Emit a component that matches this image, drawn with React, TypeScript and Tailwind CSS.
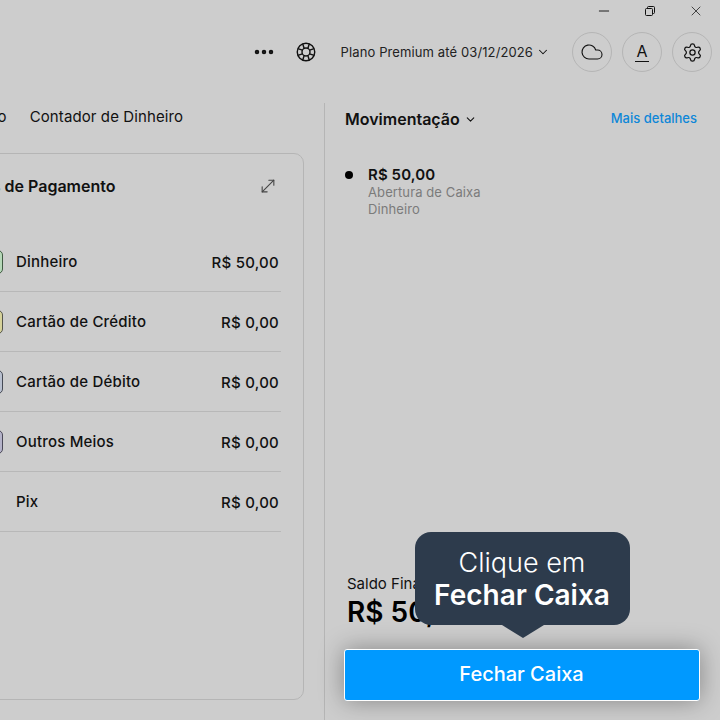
import { ChevronDown, Cloud, Ellipsis, Minus, MoveDiagonal, Settings, X } from 'lucide-react';

const rows = [
  { label: 'Cartão de Crédito', value: 'R$ 0,00', tile: 'bg-[#d6d29a] border-[#55554a]' },
  { label: 'Cartão de Débito', value: 'R$ 0,00', tile: 'bg-[#b9c0cf] border-[#454a55]' },
  { label: 'Outros Meios', value: 'R$ 0,00', tile: 'bg-[#b5b3c9] border-[#4a4858]' },
];

function Row({ label, value, tile }: { label: string; value: string; tile: string }) {
  return (
    <div className="flex h-[60px] items-center border-b border-[#b8b8b8]">
      <div className={`h-[24px] w-[24px] rounded-[5px] border ${tile}`} />
      <span className="ml-[13px] pt-[1px] text-[15px] font-medium tracking-[0.2px] text-[#111]">{label}</span>
      <span className="ml-auto mr-[2px] pt-[4px] text-[15px] font-medium tracking-[0.25px] text-[#111]">{value}</span>
    </div>
  );
}

function Buoy() {
  return (
    <svg className="mr-[25px] h-[20px] w-[20px]" viewBox="0 0 24 24" fill="none" stroke="currentColor" strokeWidth="1.7">
      <circle cx="12" cy="12" r="10.5" />
      <circle cx="12" cy="12" r="4.8" />
      <path d="M9.8 7.7 8 2.2M14.2 7.7 16 2.2M9.8 16.3 8 21.8M14.2 16.3 16 21.8M7.7 9.8 2.2 8M7.7 14.2 2.2 16M16.3 9.8 21.8 8M16.3 14.2 21.8 16" />
    </svg>
  );
}

export default function App() {
  return (
    <div className="relative flex h-[720px] w-[720px] flex-col overflow-hidden bg-[#cdcdcd] font-['Inter',sans-serif] text-[#111]">
      {/* Window controls */}
      <div className="flex h-[22px] items-center justify-end gap-[30px] pr-[16px]">
        <Minus className="-ml-px h-[16px] w-[16px]" strokeWidth={1.4} />
        <svg className="h-[16px] w-[16px]" viewBox="0 0 16 16" fill="none" stroke="currentColor" strokeWidth="1">
          <rect x="3.5" y="5.5" width="7" height="7" rx="1" />
          <path d="M5.5 5.5V4.5a1 1 0 0 1 1-1h5a1 1 0 0 1 1 1v5a1 1 0 0 1-1 1h-1" />
        </svg>
        <X className="h-[16px] w-[16px]" strokeWidth={1.1} />
      </div>

      {/* Header */}
      <div className="flex h-[60px] items-center justify-end pr-[8px]">
        <Ellipsis className="mr-[20px] h-[24px] w-[24px]" strokeWidth={2.5} />
        <Buoy />
        <span className="pt-[2px] text-[13px] tracking-[0.11px] text-[#222]">Plano Premium até 03/12/2026</span>
        <ChevronDown className="ml-[3px] mr-[22px] h-[14px] w-[14px]" strokeWidth={1.8} />
        <div className="flex gap-[10px]">
          <div className="flex h-[40px] w-[40px] items-center justify-center rounded-full border border-[#b5b5b5]">
            <Cloud className="h-[24px] w-[24px]" strokeWidth={1.1} />
          </div>
          <div className="flex h-[40px] w-[40px] items-center justify-center rounded-full border border-[#b5b5b5]">
            <span className="border-b border-[#111] px-[1px] text-[16px] leading-[19px]">A</span>
          </div>
          <div className="flex h-[40px] w-[40px] items-center justify-center rounded-full border border-[#b5b5b5]">
            <Settings className="h-[21px] w-[21px]" strokeWidth={1.4} />
          </div>
        </div>
      </div>

      {/* Main */}
      <div className="mt-[21px] flex flex-1">
        <div className="-ml-[80px] flex w-[404px] shrink-0 flex-col pr-[20px]">
          <div className="flex h-[50px] items-center gap-[23px] pb-[23px] pl-[29px] pt-[2px] text-[15px] tracking-[0.1px]">
            <span>Resumo</span>
            <span>Contador de Dinheiro</span>
          </div>
          <div className="mb-[20px] flex-1 rounded-[10px] border border-[#b5b5b5] pl-[22px] pr-[22px]">
            <div className="flex h-[65px] items-center justify-between pr-[3px]">
              <span className="pb-[2px] text-[16px] font-semibold">Formas de Pagamento</span>
              <MoveDiagonal className="mb-[2px] h-[20px] w-[20px] text-[#444]" strokeWidth={1.3} />
            </div>
            <div className="pl-[36px]">
              <div className="h-[13px]" />
              <Row label="Dinheiro" value="R$ 50,00" tile="bg-[#b6d8b8] border-[#3f5a42]" />
              {rows.map((r) => (
                <Row key={r.label} {...r} />
              ))}
              <Row label="Pix" value="R$ 0,00" tile="border-transparent" />
            </div>
          </div>
        </div>

        <div className="flex min-w-0 flex-1 flex-col border-l border-[#b5b5b5] pl-[20px] pr-[23px]">
          <div className="flex h-[32px] items-center justify-between">
            <div className="flex items-center">
              <span className="text-[16px] font-semibold">Movimentação</span>
              <ChevronDown className="ml-[4px] h-[13px] w-[13px]" strokeWidth={2} />
            </div>
            <span className="text-[13px] font-medium text-[#0e87d8]">Mais detalhes</span>
          </div>

          <div className="mt-[30px] flex">
            <div className="mt-[6px] h-[8px] w-[8px] rounded-full bg-black" />
            <div className="ml-[15px] flex flex-col">
              <span className="text-[15px] font-semibold leading-[19px] tracking-[0.1px]">R$ 50,00</span>
              <span className="text-[13px] leading-[17px] tracking-[0.1px] text-[#7b7b7b]">Abertura de Caixa</span>
              <span className="text-[13px] leading-[17px] tracking-[0.1px] text-[#7b7b7b]">Dinheiro</span>
            </div>
          </div>

          <div className="mt-auto pl-[2px]">
            <div className="pt-[1px] text-[15px] leading-[20px]">Saldo Final</div>
            <div className="mt-[1px] text-[28px] font-semibold leading-[34px] text-black">R$ 50,00</div>
          </div>

          <div className="relative -ml-px mb-[19px] mt-[20px] w-[356px]">
            {/* Tooltip */}
            <div className="absolute bottom-[76px] left-[71px] flex h-[93px] w-[215px] flex-col items-center justify-center rounded-[16px] bg-[#2d3b4c] pr-[1px] text-white">
              <span className="text-[27px] font-light leading-[32px]">Clique em</span>
              <span className="text-[28px] font-semibold leading-[32px]">Fechar Caixa</span>
              <div className="absolute -bottom-[13px] left-1/2 h-0 w-0 -translate-x-1/2 border-x-[21px] border-t-[13px] border-x-transparent border-t-[#2d3b4c]" />
            </div>
            <button className="flex h-[52px] w-full items-center justify-center rounded-[3px] border border-white bg-[#0099ff] pb-[2px] pr-[1px] text-[20px] font-medium text-white shadow-[0_0_24px_rgba(0,0,0,0.35)]">
              Fechar Caixa
            </button>
          </div>
        </div>
      </div>
    </div>
  );
}
